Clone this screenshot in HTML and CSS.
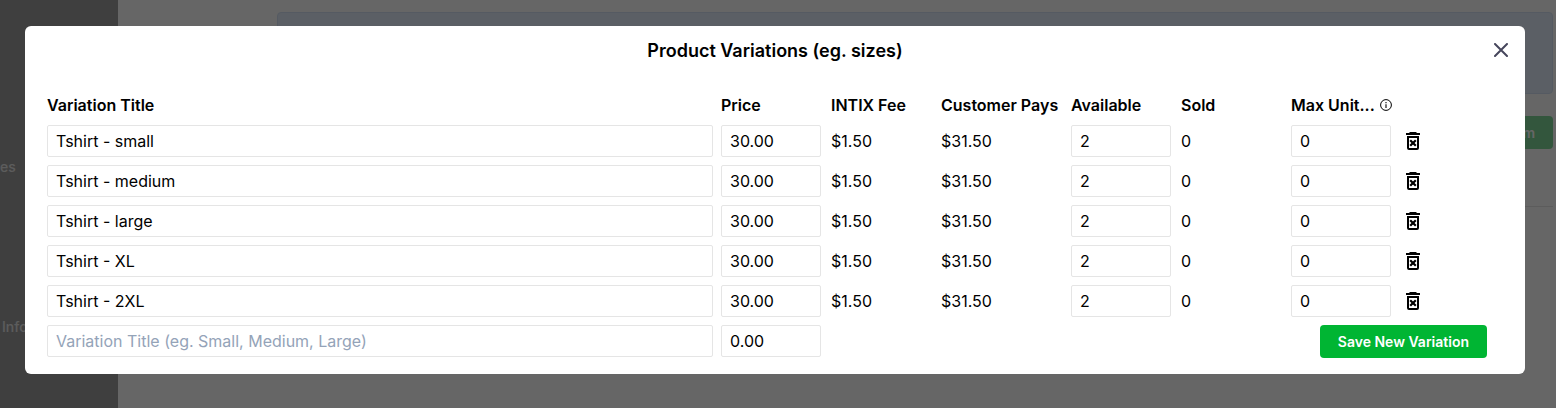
FILE: index.html
```html
<!DOCTYPE html>
<html lang="en">
<head>
    <meta charset="UTF-8">
    <meta name="viewport" content="width=device-width, initial-scale=1.0">
    <title>Product Variations</title>
    <link rel="stylesheet" href="styles.css">
</head>
<body>

    <div class="page">
        <nav class="sidebar">
            <a class="sidebar-link" href="#">es</a>
            <a class="sidebar-link" href="#">Info</a>
        </nav>
        <main class="main">
            <div class="notice"></div>
            <div class="toolbar">
                <button type="button" class="add-item">Add Item</button>
            </div>
            <hr class="divider">
        </main>
    </div>

    <div class="overlay">
        <div class="modal" role="dialog" aria-labelledby="modalTitle">
            <div class="modal-header">
                <h2 id="modalTitle">Product Variations (eg. sizes)</h2>
                <button type="button" class="close" aria-label="Close">
                    <svg width="14" height="14" viewBox="0 0 14 14"><path d="M1 1L13 13M13 1L1 13" stroke="#46465c" stroke-width="2" stroke-linecap="round"/></svg>
                </button>
            </div>

            <svg class="icon-defs" width="0" height="0">
                <symbol id="trash" viewBox="0 0 14 18">
                    <path d="M4 0H10L11 1H14V3H0V1H3ZM1 4H13V16Q13 18 11 18H3Q1 18 1 16ZM3 6V16H11V6Z" fill-rule="evenodd"/>
                    <path d="M4.2 8.2L9.8 13.8M9.8 8.2L4.2 13.8" stroke="#000" stroke-width="2.2"/>
                </symbol>
            </svg>

            <table class="variations">
                <colgroup>
                    <col>
                    <col class="col">
                    <col class="col">
                    <col class="col-pays">
                    <col class="col">
                    <col class="col">
                    <col class="col">
                    <col class="col-actions">
                </colgroup>
                <thead>
                    <tr>
                        <th>Variation Title</th>
                        <th>Price</th>
                        <th>INTIX Fee</th>
                        <th>Customer Pays</th>
                        <th>Available</th>
                        <th>Sold</th>
                        <th>
                            <div class="max-units">
                                Max Unit...
                                <svg width="12" height="12" viewBox="0 0 12 12"><circle cx="6" cy="6" r="5.4" fill="none" stroke="#000"/><path d="M6 5.2V9M6 3V4.2" stroke="#000" stroke-width="1.1"/></svg>
                            </div>
                        </th>
                        <th></th>
                    </tr>
                </thead>
                <tbody>
                    <tr>
                        <td><input type="text" aria-label="Variation title" value="Tshirt - small"></td>
                        <td><input type="text" aria-label="Price" value="30.00"></td>
                        <td>$1.50</td>
                        <td>$31.50</td>
                        <td><input type="text" aria-label="Available" value="2"></td>
                        <td>0</td>
                        <td><input type="text" aria-label="Max units" value="0"></td>
                        <td><button type="button" class="delete" aria-label="Delete"><svg width="14" height="18"><use href="#trash"/></svg></button></td>
                    </tr>
                    <tr>
                        <td><input type="text" aria-label="Variation title" value="Tshirt - medium"></td>
                        <td><input type="text" aria-label="Price" value="30.00"></td>
                        <td>$1.50</td>
                        <td>$31.50</td>
                        <td><input type="text" aria-label="Available" value="2"></td>
                        <td>0</td>
                        <td><input type="text" aria-label="Max units" value="0"></td>
                        <td><button type="button" class="delete" aria-label="Delete"><svg width="14" height="18"><use href="#trash"/></svg></button></td>
                    </tr>
                    <tr>
                        <td><input type="text" aria-label="Variation title" value="Tshirt - large"></td>
                        <td><input type="text" aria-label="Price" value="30.00"></td>
                        <td>$1.50</td>
                        <td>$31.50</td>
                        <td><input type="text" aria-label="Available" value="2"></td>
                        <td>0</td>
                        <td><input type="text" aria-label="Max units" value="0"></td>
                        <td><button type="button" class="delete" aria-label="Delete"><svg width="14" height="18"><use href="#trash"/></svg></button></td>
                    </tr>
                    <tr>
                        <td><input type="text" aria-label="Variation title" value="Tshirt - XL"></td>
                        <td><input type="text" aria-label="Price" value="30.00"></td>
                        <td>$1.50</td>
                        <td>$31.50</td>
                        <td><input type="text" aria-label="Available" value="2"></td>
                        <td>0</td>
                        <td><input type="text" aria-label="Max units" value="0"></td>
                        <td><button type="button" class="delete" aria-label="Delete"><svg width="14" height="18"><use href="#trash"/></svg></button></td>
                    </tr>
                    <tr>
                        <td><input type="text" aria-label="Variation title" value="Tshirt - 2XL"></td>
                        <td><input type="text" aria-label="Price" value="30.00"></td>
                        <td>$1.50</td>
                        <td>$31.50</td>
                        <td><input type="text" aria-label="Available" value="2"></td>
                        <td>0</td>
                        <td><input type="text" aria-label="Max units" value="0"></td>
                        <td><button type="button" class="delete" aria-label="Delete"><svg width="14" height="18"><use href="#trash"/></svg></button></td>
                    </tr>
                    <tr>
                        <td><input type="text" aria-label="New variation title" placeholder="Variation Title (eg. Small, Medium, Large)"></td>
                        <td><input type="text" aria-label="New price" value="0.00"></td>
                        <td colspan="4"></td>
                        <td colspan="2" class="save-cell"><button type="button" class="save">Save New Variation</button></td>
                    </tr>
                </tbody>
            </table>
        </div>
    </div>

</body>
</html>
```

FILE: styles.css
```css
* {
    box-sizing: border-box;
}
body {
    margin: 0;
    font-family: Inter, "Liberation Sans", sans-serif;
    font-size: 16px;
    color: #000;
    background-color: #fff;
}
button {
    font-family: inherit;
    border: none;
    cursor: pointer;
}

/* page behind the dialog */
.page {
    display: flex;
    height: 100vh;
    overflow: hidden;
}
.sidebar {
    width: 118px;
    display: flex;
    flex-direction: column;
    gap: 140px;
    padding: 157px 0 0 2px;
    background-color: #9f9f9f;
}
.sidebar-link {
    color: #e6e6e6;
    font-size: 14px;
    line-height: 20px;
    font-weight: 500;
    text-decoration: none;
}
.sidebar-link:first-child {
    margin-left: -2px;
}
.main {
    flex: 1;
    padding: 12px 3px 0 159px;
}
.notice {
    height: 82px;
    border: 1px solid #d5e2f4;
    border-radius: 4px;
    background-color: #e4eefc;
}
.toolbar {
    display: flex;
    justify-content: flex-end;
    padding-top: 22px;
}
.add-item {
    height: 33px;
    padding: 0 18px;
    border-radius: 4px;
    background-color: #80d898;
    color: #fff;
    font-size: 14px;
    font-weight: 600;
}
.divider {
    margin: 57px 0 0;
    border: none;
    border-top: 1px solid #e5e5e5;
}

/* dialog */
.overlay {
    position: fixed;
    inset: 0;
    padding: 26px 31px 0 25px;
    background-color: rgba(0, 0, 0, 0.6);
}
.modal {
    padding: 0 22px 13px;
    border-radius: 6px;
    background-color: #fff;
}
.modal-header {
    display: grid;
    grid-template-columns: 1fr auto 1fr;
    align-items: center;
    height: 48px;
}
.modal-header h2 {
    grid-column: 2;
    margin: 0;
    font-size: 18px;
    font-weight: 600;
}
.close {
    justify-self: end;
    display: flex;
    padding: 0;
    margin-right: -5px;
    background: none;
}
.icon-defs {
    display: block;
}

.variations {
    width: 100%;
    margin-top: 16px;
    table-layout: fixed;
    border-collapse: collapse;
}
.col {
    width: 110px;
}
.col-pays {
    width: 130px;
}
.col-actions {
    width: 102px;
}
.variations th {
    height: 31px;
    padding: 0 0 2px;
    text-align: left;
    font-weight: 600;
    white-space: nowrap;
}
.variations td {
    height: 40px;
    padding: 0 10px 0 0;
}
.variations td:first-child {
    padding-right: 8px;
}
.variations input {
    display: block;
    width: 100%;
    height: 32px;
    padding: 0 8px;
    border: 1px solid #e5e5e5;
    border-radius: 2px;
    font-family: inherit;
    font-size: 16px;
    color: #000;
    background-color: #fff;
}
.variations input::placeholder {
    color: #94a3b8;
}
.max-units {
    display: flex;
    align-items: center;
    gap: 5px;
}
.delete {
    display: flex;
    padding: 0 5px;
    background: none;
}
.variations .save-cell {
    padding-right: 16px;
}
.save {
    display: block;
    height: 33px;
    margin-left: auto;
    padding: 0 18px;
    border-radius: 4px;
    background-color: #00b533;
    color: #fff;
    font-size: 14px;
    font-weight: 600;
}
```
